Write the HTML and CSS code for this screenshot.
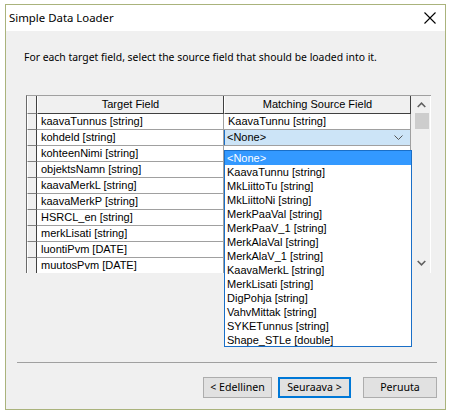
FILE: index.html
```html
<!DOCTYPE html>
<html>
<head>
<meta charset="utf-8">
<link rel="stylesheet" href="styles.css">
</head>
<body>
<div class="window">
  <div class="titlebar">
    <span class="title">Simple Data Loader</span>
    <svg class="close" width="12" height="12" viewBox="0 0 12 12"><path d="M0.5 0.5 L11.5 11.5 M11.5 0.5 L0.5 11.5" stroke="#000" stroke-width="1.1" fill="none"/></svg>
  </div>
  <div class="content">
    <p class="instruction">For each target field, select the source field that should be loaded into it.</p>
    <div class="grid">
      <div class="table">
        <div class="row head">
          <div class="rh"></div>
          <div class="hc">Target Field</div>
          <div class="hc">Matching Source Field</div>
        </div>
        <div class="row"><div class="rh"></div><div class="c">kaavaTunnus [string]</div><div class="c">KaavaTunnu [string]</div></div>
        <div class="row"><div class="rh"></div><div class="c">kohdeld [string]</div><div class="c combo-cell"><div class="combo"><span>&lt;None&gt;</span><svg width="9" height="6" viewBox="0 0 9 6"><path d="M0.5 0.5 L4.5 4.5 L8.5 0.5" stroke="#555" stroke-width="1" fill="none"/></svg></div></div></div>
        <div class="row"><div class="rh"></div><div class="c">kohteenNimi [string]</div><div class="c"></div></div>
        <div class="row"><div class="rh"></div><div class="c">objektsNamn [string]</div><div class="c"></div></div>
        <div class="row"><div class="rh"></div><div class="c">kaavaMerkL [string]</div><div class="c"></div></div>
        <div class="row"><div class="rh"></div><div class="c">kaavaMerkP [string]</div><div class="c"></div></div>
        <div class="row"><div class="rh"></div><div class="c">HSRCL_en [string]</div><div class="c"></div></div>
        <div class="row"><div class="rh"></div><div class="c">merkLisati [string]</div><div class="c"></div></div>
        <div class="row"><div class="rh"></div><div class="c">luontiPvm [DATE]</div><div class="c"></div></div>
        <div class="row"><div class="rh"></div><div class="c">muutosPvm [DATE]</div><div class="c"></div></div>
      </div>
      <div class="scrollbar">
        <svg class="arrow" width="9" height="6" viewBox="0 0 9 6"><path d="M0.7 5 L4.5 1.2 L8.3 5" stroke="#606060" stroke-width="1.6" fill="none"/></svg>
        <div class="thumb"></div>
        <div class="track"></div>
        <svg class="arrow" width="9" height="6" viewBox="0 0 9 6"><path d="M0.7 1 L4.5 4.8 L8.3 1" stroke="#606060" stroke-width="1.6" fill="none"/></svg>
      </div>
      <ul class="dropdown">
        <li class="sel">&lt;None&gt;</li>
        <li>KaavaTunnu [string]</li>
        <li>MkLiittoTu [string]</li>
        <li>MkLiittoNi [string]</li>
        <li>MerkPaaVal [string]</li>
        <li>MerkPaaV_1 [string]</li>
        <li>MerkAlaVal [string]</li>
        <li>MerkAlaV_1 [string]</li>
        <li>KaavaMerkL [string]</li>
        <li>MerkLisati [string]</li>
        <li>DigPohja [string]</li>
        <li>VahvMittak [string]</li>
        <li>SYKETunnus [string]</li>
        <li>Shape_STLe [double]</li>
      </ul>
    </div>
    <div class="separator"></div>
    <div class="buttons">
      <button class="btn b1">&lt; Edellinen</button>
      <button class="btn b2 focus">Seuraava &gt;</button>
      <button class="btn b3">Peruuta</button>
    </div>
  </div>
</div>
</body>
</html>
```
FILE: styles.css
```css
html, body {
  margin: 0;
  padding: 0;
  background: #ffffff;
}
body {
  width: 450px;
  height: 414px;
  overflow: hidden;
  font-family: "Noto Sans", "Open Sans", sans-serif;
}
.window {
  margin: 4px 0 0 5px;
  width: 439px;
  height: 404px;
  border: 1px solid #aab37c;
  display: flex;
  flex-direction: column;
  background: #f0f0f0;
}
.titlebar {
  height: 26px;
  background: #ffffff;
  display: flex;
  align-items: center;
  justify-content: space-between;
  padding: 0 9px 0 3px;
  flex: none;
}
.title {
  font-size: 11.4px;
  color: #000;
  position: relative;
  top: -1px;
}
.close {
  display: block;
  margin-top: -1px;
}
.content {
  flex: 1;
  display: flex;
  flex-direction: column;
}
.instruction {
  margin: 18px 0 0 18px;
  font-size: 10.4px;
  line-height: 16px;
  height: 16px;
  color: #000;
  white-space: nowrap;
}
.grid {
  position: relative;
  margin: 30px 0 0 20px;
  width: 404px;
  height: 177px;
  border-top: 1px solid #a0a0a0;
  border-left: 1px solid #6a6a6a;
  display: flex;
  font-family: "Liberation Sans", Arial, sans-serif;
  font-size: 11px;
  color: #000;
}
.table {
  width: 385px;
  height: 177px;
  overflow: hidden;
  background: #f0f0f0;
}
.row {
  display: flex;
  height: 16px;
}
.row.head {
  height: 18px;
}
.rh {
  flex: none;
  background: #f0f0f0;
  border-left: 1px solid #ffffff;
  border-right: 1px solid #404040;
  border-bottom: 1px solid #808080;
  box-sizing: border-box;
  width: 10px;
}
.hc {
  width: 187px;
  flex: none;
  box-sizing: border-box;
  border-right: 1px solid #404040;
  border-bottom: 1px solid #404040;
  border-left: 1px solid #ffffff;
  text-align: center;
  line-height: 17px;
  color: #000;
}
.c {
  width: 187px;
  flex: none;
  box-sizing: border-box;
  background: #ffffff;
  border-right: 1px solid #a0a0a0;
  border-bottom: 1px solid #a0a0a0;
  padding-left: 4px;
  line-height: 15px;
  white-space: nowrap;
  overflow: hidden;
}
.c.combo-cell {
  padding: 0;
}
.combo {
  box-sizing: border-box;
  height: 17px;
  margin-top: -1px;
  width: 187px;
  background: #cce4f7;
  border: 1px solid #1a6fc7;
  display: flex;
  align-items: center;
  justify-content: space-between;
  padding: 0 7px 0 2px;
  position: relative;
  z-index: 1;
}
.combo svg {
  display: block;
}
.scrollbar {
  width: 17px;
  flex: none;
  margin-left: 1px;
  border-right: 1px solid #ffffff;
  background: #f0f0f0;
  display: flex;
  flex-direction: column;
  align-items: center;
}
.scrollbar .arrow {
  display: block;
  flex: none;
  margin-top: 6px;
}
.scrollbar .arrow:last-child {
  margin: 0 0 7px 0;
}
.thumb {
  width: 14px;
  height: 16px;
  background: #cdcdcd;
  margin-top: 5px;
  flex: none;
}
.track {
  flex: 1;
}
.dropdown {
  position: absolute;
  left: 197px;
  top: 54px;
  width: 188px;
  height: 197px;
  box-sizing: border-box;
  margin: 0;
  padding: 0;
  list-style: none;
  background: #ffffff;
  border: 1px solid #1a6fc7;
  z-index: 2;
}
.dropdown li {
  height: 14px;
  line-height: 14px;
  padding-left: 2px;
  white-space: nowrap;
  color: #000;
}
.dropdown li.sel {
  background: #3399ff;
  color: #ffffff;
}
.separator {
  margin: 89px 0 0 11px;
  width: 420px;
  height: 1px;
  background: #a0a0a0;
  flex: none;
}
.buttons {
  display: flex;
  margin: 14px 0 0 197px;
}
.btn {
  box-sizing: border-box;
  height: 21px;
  font-family: "Noto Sans", "Open Sans", sans-serif;
  font-size: 10.6px;
  line-height: 17px;
  padding: 0;
  background: #e1e1e1;
  border: 1px solid #adadad;
  color: #000;
}
.b1 { width: 69px; }
.b2 { width: 73px; margin-left: 6px; }
.b3 { width: 74px; margin-left: 12px; }
.btn.focus {
  border: 2px solid #0078d7;
}
```
